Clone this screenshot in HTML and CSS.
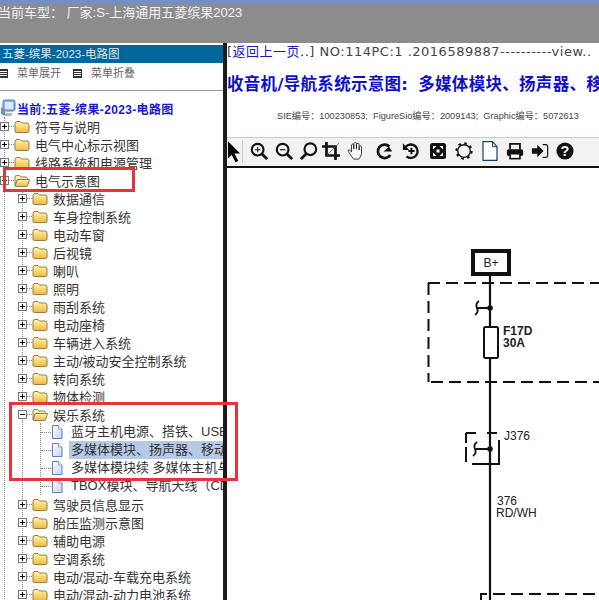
FILE: index.html
```html
<!DOCTYPE html>
<html lang="zh-CN">
<head>
    <meta charset="UTF-8">
    <title>电路图</title>
    <link rel="stylesheet" href="styles.css">
</head>
<body>
    <svg class="sprite" xmlns="http://www.w3.org/2000/svg">
        <defs>
            <linearGradient id="folder-fill" x1="0" y1="0" x2="0" y2="1">
                <stop offset="0" stop-color="#fff3b0"/>
                <stop offset="1" stop-color="#eebc3a"/>
            </linearGradient>
            <linearGradient id="doc-fill" x1="0" y1="0" x2="1" y2="1">
                <stop offset="0" stop-color="#ffffff"/>
                <stop offset="1" stop-color="#c4d4f0"/>
            </linearGradient>
        </defs>
        <symbol id="plus" viewBox="0 0 9 9">
            <rect x=".5" y=".5" width="8" height="8" fill="#fff" stroke="#777"/>
            <path d="M2 4.500h5M4.500 2v5" stroke="#000"/>
        </symbol>
        <symbol id="minus" viewBox="0 0 9 9">
            <rect x=".5" y=".5" width="8" height="8" fill="#fff" stroke="#777"/>
            <path d="M2 4.500h5" stroke="#000"/>
        </symbol>
        <symbol id="folder" viewBox="0 0 16 16">
            <path d="M1 5.500q0-2 2-2h3l1.500 1.500h5.500q2 0 2 2v6q0 1.500-1.500 1.500h-11q-1.500 0-1.500-1.500z" fill="url(#folder-fill)" stroke="#8f7c50"/>
        </symbol>
        <symbol id="folder-open" viewBox="0 0 16 16">
            <path d="M1 5q0-1.500 1.500-1.500h3l1.500 1.500h5q1.500 0 1.500 1.500v1h-10l-2.500 6z" fill="#fdf0b0" stroke="#8f7c50"/>
            <path d="M1 14l2.500-6.500h12l-2 6.500q-.2.500-1 .5h-10.500z" fill="url(#folder-fill)" stroke="#8f7c50"/>
        </symbol>
        <symbol id="doc" viewBox="0 0 12 16">
            <path d="M1.500 1.500h6l3.500 3.500v9.500h-9.500z" fill="url(#doc-fill)" stroke="#5f7fb8"/>
            <path d="M7.500 1.500v3.500h3.500" fill="#fff" stroke="#8aa2cc"/>
        </symbol>
    </svg>

    <div class="top-bar">
        <div class="car-type">当前车型： 厂家:S-上海通用五菱缤果2023</div>
    </div>

    <div class="main">
        <div class="side">
            <div class="side-title">五菱-缤果-2023-电路图</div>
            <div class="side-menu">
                <span class="menu-item"><span class="menu-icon"></span>菜单展开</span>
                <span class="menu-item"><span class="menu-icon"></span>菜单折叠</span>
            </div>
            <div class="tree-root">
                <svg class="root-icon" viewBox="0 0 16 18">
                    <rect x="3" y="1" width="12" height="11" rx="2" fill="#8fb4ee" stroke="#5577b5"/>
                    <rect x="5" y="3" width="8" height="7" fill="#dbe8ff"/>
                    <path d="M1 8l4 2v7l-4-2z" fill="#6e8fc9"/>
                    <path d="M5 14l8 0-2 3h-6z" fill="#a9b8d0"/>
                </svg>
                当前:五菱-缤果-2023-电路图
            </div>
            <ul class="tree">
                <li class="row"><svg class="box"><use href="#plus"/></svg><i class="dash"></i><svg class="folder"><use href="#folder"/></svg>符号与说明</li>
                <li class="row"><svg class="box"><use href="#plus"/></svg><i class="dash"></i><svg class="folder"><use href="#folder"/></svg>电气中心标示视图</li>
                <li class="row"><svg class="box"><use href="#plus"/></svg><i class="dash"></i><svg class="folder"><use href="#folder"/></svg>线路系统和电源管理</li>
                <li class="row"><svg class="box"><use href="#minus"/></svg><i class="dash"></i><svg class="folder"><use href="#folder-open"/></svg>电气示意图</li>
                <li>
                    <ul class="tree sub">
                        <li class="row"><svg class="box"><use href="#plus"/></svg><i class="dash"></i><svg class="folder"><use href="#folder"/></svg>数据通信</li>
                        <li class="row"><svg class="box"><use href="#plus"/></svg><i class="dash"></i><svg class="folder"><use href="#folder"/></svg>车身控制系统</li>
                        <li class="row"><svg class="box"><use href="#plus"/></svg><i class="dash"></i><svg class="folder"><use href="#folder"/></svg>电动车窗</li>
                        <li class="row"><svg class="box"><use href="#plus"/></svg><i class="dash"></i><svg class="folder"><use href="#folder"/></svg>后视镜</li>
                        <li class="row"><svg class="box"><use href="#plus"/></svg><i class="dash"></i><svg class="folder"><use href="#folder"/></svg>喇叭</li>
                        <li class="row"><svg class="box"><use href="#plus"/></svg><i class="dash"></i><svg class="folder"><use href="#folder"/></svg>照明</li>
                        <li class="row"><svg class="box"><use href="#plus"/></svg><i class="dash"></i><svg class="folder"><use href="#folder"/></svg>雨刮系统</li>
                        <li class="row"><svg class="box"><use href="#plus"/></svg><i class="dash"></i><svg class="folder"><use href="#folder"/></svg>电动座椅</li>
                        <li class="row"><svg class="box"><use href="#plus"/></svg><i class="dash"></i><svg class="folder"><use href="#folder"/></svg>车辆进入系统</li>
                        <li class="row"><svg class="box"><use href="#plus"/></svg><i class="dash"></i><svg class="folder"><use href="#folder"/></svg>主动/被动安全控制系统</li>
                        <li class="row"><svg class="box"><use href="#plus"/></svg><i class="dash"></i><svg class="folder"><use href="#folder"/></svg>转向系统</li>
                        <li class="row"><svg class="box"><use href="#plus"/></svg><i class="dash"></i><svg class="folder"><use href="#folder"/></svg>物体检测</li>
                        <li class="row"><svg class="box"><use href="#minus"/></svg><i class="dash"></i><svg class="folder"><use href="#folder-open"/></svg>娱乐系统</li>
                        <li>
                            <ul class="tree leaves">
                                <li class="leaf"><i class="elbow"></i><svg class="doc"><use href="#doc"/></svg><span class="leaf-text">蓝牙主机电源、搭铁、USB</span></li>
                                <li class="leaf"><i class="elbow"></i><svg class="doc"><use href="#doc"/></svg><span class="leaf-text selected">多媒体模块、扬声器、移动</span></li>
                                <li class="leaf"><i class="elbow"></i><svg class="doc"><use href="#doc"/></svg><span class="leaf-text">多媒体模块续 多媒体主机与</span></li>
                                <li class="leaf"><i class="elbow"></i><svg class="doc"><use href="#doc"/></svg><span class="leaf-text">TBOX模块、导航天线（CD</span></li>
                            </ul>
                        </li>
                        <li class="row"><svg class="box"><use href="#plus"/></svg><i class="dash"></i><svg class="folder"><use href="#folder"/></svg>驾驶员信息显示</li>
                        <li class="row"><svg class="box"><use href="#plus"/></svg><i class="dash"></i><svg class="folder"><use href="#folder"/></svg>胎压监测示意图</li>
                        <li class="row"><svg class="box"><use href="#plus"/></svg><i class="dash"></i><svg class="folder"><use href="#folder"/></svg>辅助电源</li>
                        <li class="row"><svg class="box"><use href="#plus"/></svg><i class="dash"></i><svg class="folder"><use href="#folder"/></svg>空调系统</li>
                        <li class="row"><svg class="box"><use href="#plus"/></svg><i class="dash"></i><svg class="folder"><use href="#folder"/></svg>电动/混动-车载充电系统</li>
                        <li class="row"><svg class="box"><use href="#plus"/></svg><i class="dash"></i><svg class="folder"><use href="#folder"/></svg>电动/混动-动力电池系统</li>
                    </ul>
                </li>
            </ul>
        </div>

        <div class="content">
            <div class="nav-line"><span class="bracket">[</span><a class="back-link" href="#">返回上一页..</a><span class="bracket">]</span> NO:114PC:1 .2016589887----------view..</div>
            <h1 class="doc-title">收音机/导航系统示意图: 多媒体模块、扬声器、移动电话</h1>
            <div class="doc-ids">SIE编号：100230853;&nbsp; FigureSio编号：2009143;&nbsp; Graphic编号：5072613</div>

            <div class="toolbar">
                <svg class="tool tool-arrow" viewBox="0 0 16 24"><path d="M1 1l13 13h-6l4 8-3 1.500-4-8-4 4z" fill="#000"/></svg>
                <svg class="tool" viewBox="0 0 20 20"><circle cx="8.500" cy="8.500" r="6.500" fill="none" stroke="#111" stroke-width="2.400"/><path d="M13 13l6 6" stroke="#111" stroke-width="3"/><path d="M5.500 8.500h6M8.500 5.500v6" stroke="#333" stroke-width="1.300"/></svg>
                <svg class="tool" viewBox="0 0 20 20"><circle cx="8.500" cy="8.500" r="6.500" fill="none" stroke="#111" stroke-width="2.400"/><path d="M13 13l6 6" stroke="#111" stroke-width="3"/><path d="M5.500 8.500h6" stroke="#333" stroke-width="1.500"/></svg>
                <svg class="tool" viewBox="0 0 20 20"><circle cx="11.500" cy="8" r="6.500" fill="none" stroke="#111" stroke-width="2.400"/><path d="M7 13l-6 6" stroke="#111" stroke-width="3"/></svg>
                <svg class="tool pull-3" viewBox="0 0 20 20"><path d="M5 0v15h15M0 5h15v15" fill="none" stroke="#111" stroke-width="3"/><path d="M5 15L19 1" stroke="#555" stroke-width=".8"/></svg>
                <svg class="tool" viewBox="0 0 20 20"><path d="M5 16L1.500 10.500q-.8-1.800.8-2l2.700 2.500V3.500q.3-1.500 1.500-1.200T7.500 3.500V8 1.800q.5-1.500 1.800-1.300t1.200 1.500V8 2.500q.5-1.300 1.800-1t1.200 1.500V9 5q.6-1 1.600-.8t1 1.500V12q0 4-3 7H7.500z" fill="#fff" stroke="#222" stroke-width="1"/></svg>
                <svg class="tool push-3" viewBox="0 0 20 20"><path d="M17 14.500A7.500 7.500 0 1 1 16 5" fill="none" stroke="#111" stroke-width="3"/><path d="M19 10.500h-9.500l6-5.500z" fill="#111"/></svg>
                <svg class="tool push-2" viewBox="0 0 20 20"><path d="M4 5.500A7.500 7.500 0 1 1 5 16" fill="none" stroke="#111" stroke-width="2.600"/><path d="M1 1.500v7.500h7z" fill="#111"/><path d="M7 10h7M10.500 6.500v7" stroke="#111" stroke-width="2.200"/></svg>
                <svg class="tool tool-small push-3" viewBox="0 0 16 16"><rect width="16" height="16" rx="2.500" fill="#111"/><path d="M3 3h3.500L3 6.500zM13 3v3.500L9.500 3zM3 13V9.500L6.500 13zM13 13H9.500L13 9.500zM6.500 6.500h3v3h-3z" fill="#fff"/></svg>
                <svg class="tool push-2" viewBox="0 0 20 20"><circle cx="10" cy="10" r="7" fill="#f5f5f5" stroke="#111" stroke-width="1.500"/><circle cx="10" cy="10" r="8.600" fill="none" stroke="#111" stroke-width="2" stroke-dasharray="3 3.750"/></svg>
                <svg class="tool tool-page push-2" viewBox="0 0 16 20"><path d="M1 .7h9.500l4.500 5v13.600h-14z" fill="#fff" stroke="#1d3f66" stroke-width="1.200"/><path d="M10.500 .7v5h4.500" fill="none" stroke="#1d3f66"/></svg>
                <svg class="tool push-1" viewBox="0 0 20 20"><path d="M4.500 8V2h11v6" fill="none" stroke="#111" stroke-width="2"/><rect x="1" y="8" width="18" height="7.500" rx="2" fill="#111"/><rect x="4.500" y="13" width="11" height="5.500" fill="#fff" stroke="#111" stroke-width="1.800"/></svg>
                <svg class="tool" viewBox="0 0 20 20"><path d="M1 7h6V3l7 7-7 7v-4H1z" fill="#111"/><path d="M13 3h3.500q2 0 2 2v10q0 2-2 2H13" fill="none" stroke="#111" stroke-width="1.300"/></svg>
                <svg class="tool" viewBox="0 0 20 20"><circle cx="10" cy="10" r="9.500" fill="#111"/><text class="help-mark" x="10" y="15.500" text-anchor="middle">?</text></svg>
            </div>

            <svg class="diagram" viewBox="0 0 372 432">
                <g fill="none" stroke="#111">
                    <rect x="246" y="83" width="36" height="23" stroke-width="4"/>
                    <path class="dashed" d="M201 115h171M201.500 115v99M204 214h168" stroke-width="2"/>
                    <path d="M263 108V432" stroke-width="2.200"/>
                    <rect x="257" y="159" width="14" height="31" rx="1.500" fill="#fff" stroke-width="2"/>
                    <path d="M263 140h-14M252 133q-4 3-2 7t-2 7" stroke-width="1.800"/>
                    <path d="M239 265v10M239 279v15M239 265h10M260 265h10M272 272v25M245 296h27" stroke-width="2"/>
                    <path d="M263 281h-14M250 274q-4 3-2 7t-2 7" stroke-width="1.800"/>
                    <path class="dashed" d="M254 432v-6h118" stroke-width="2"/>
                </g>
                <circle cx="263" cy="140" r="2.800" fill="#111"/>
                <circle cx="263" cy="281" r="2.800" fill="#111"/>
                <text class="wire-label" x="264" y="99" text-anchor="middle">B+</text>
                <text class="wire-label strong" x="276" y="167">F17D</text>
                <text class="wire-label strong" x="276" y="179">30A</text>
                <text class="wire-label" x="277" y="272">J376</text>
                <text class="wire-label" x="270" y="337">376</text>
                <text class="wire-label" x="269" y="349">RD/WH</text>
            </svg>
        </div>
    </div>

    <div class="mark mark-one"></div>
    <div class="mark mark-two"></div>
</body>
</html>
```
FILE: styles.css
```css
html, body {
    margin: 0;
    padding: 0;
    height: 600px;
    overflow: hidden;
    background-color: #fff;
    font-family: "Liberation Sans", "Noto Sans CJK SC", sans-serif;
    color: #333;
}
.sprite {
    position: absolute;
    width: 0;
    height: 0;
}
.top-bar {
    height: 39px;
    border-top: 4px solid #7390c6;
    background-color: #8c8c8c;
}
.car-type {
    color: #f2f2f2;
    font-size: 13px;
    line-height: 17px;
    margin-left: -2px;
    white-space: nowrap;
}
.main {
    display: flex;
    height: 557px;
}
.side {
    width: 223px;
    padding-top: 2px;
    overflow: hidden;
    flex-shrink: 0;
}
.side-title {
    height: 18px;
    line-height: 18px;
    background-color: #00679a;
    color: #e4e4e4;
    font-size: 11.500px;
    padding-left: 2px;
    white-space: nowrap;
}
.side-menu {
    display: flex;
    height: 25px;
    padding-top: 2px;
    border-bottom: 1px solid #999;
    font-size: 11px;
    color: #666;
    margin-bottom: 8px;
}
.menu-item {
    display: flex;
    align-items: flex-start;
    line-height: 17px;
    width: 74px;
}
.menu-icon {
    width: 7px;
    height: 7px;
    border: 1px solid #333;
    margin: 4px 9px 0 -1px;
    background: repeating-linear-gradient(#333 0 1px, #fff 1px 2px);
    flex-shrink: 0;
}
.tree-root {
    display: flex;
    align-items: center;
    height: 18px;
    color: #1a1ac8;
    font-size: 12px;
    font-weight: bold;
    letter-spacing: .35px;
    white-space: nowrap;
}
.root-icon {
    width: 16px;
    height: 18px;
    margin-right: 1px;
}
.tree {
    list-style: none;
    margin: 0 0 0 4px;
    padding: 0;
    border-left: 1px dotted #888;
}
.sub, .leaves {
    margin-left: 17px;
}
.row {
    display: flex;
    align-items: center;
    height: 18px;
    margin-left: -5px;
    font-size: 13px;
    color: #333;
    white-space: nowrap;
}
.box {
    width: 9px;
    height: 9px;
    flex-shrink: 0;
}
.dash {
    width: 5px;
    border-top: 1px dotted #888;
    flex-shrink: 0;
}
.folder {
    width: 16px;
    height: 16px;
    margin-right: 5px;
    flex-shrink: 0;
}
.leaf {
    display: flex;
    align-items: center;
    height: 18px;
    font-size: 13px;
    color: #333;
    white-space: nowrap;
}
.elbow {
    width: 10px;
    border-top: 1px dotted #888;
    flex-shrink: 0;
}
.doc {
    width: 12px;
    height: 16px;
    margin-right: 6px;
    flex-shrink: 0;
}
.leaf-text {
    display: block;
    height: 18px;
    line-height: 18px;
    padding-left: 2px;
    flex-grow: 1;
}
.selected {
    background-color: #b6c9e6;
}
.content {
    flex-grow: 1;
    min-width: 0;
    border-left: 4px solid #1c1c1c;
    overflow: hidden;
}
.nav-line {
    height: 18px;
    line-height: 18px;
    font-family: "DejaVu Sans", "Noto Sans CJK SC", sans-serif;
    font-size: 13px;
    letter-spacing: .5px;
    color: #444;
    white-space: nowrap;
}
.back-link {
    color: #1a1ac0;
    text-decoration: none;
}
.doc-title {
    margin: 12px 0 0;
    height: 24px;
    line-height: 24px;
    font-family: "DejaVu Sans", "Noto Sans CJK SC", sans-serif;
    font-size: 16.500px;
    letter-spacing: .3px;
    word-spacing: 4px;
    font-weight: bold;
    color: #0f0fc8;
    white-space: nowrap;
}
.doc-ids {
    margin: 11px 0 0 50px;
    height: 16px;
    line-height: 16px;
    font-size: 9.200px;
    color: #444;
    white-space: nowrap;
}
.toolbar {
    display: flex;
    align-items: center;
    gap: 7px;
    height: 26px;
    padding-bottom: 2px;
    margin-top: 13px;
    border-top: 1px solid #bcd0e4;
    border-bottom: 2px solid #111;
    background-color: #f2f2f2;
}
.tool {
    width: 18px;
    height: 18px;
    flex-shrink: 0;
}
.tool-arrow {
    width: 15px;
    height: 23px;
    border-right: 1px solid #ccc;
}
.tool-small {
    width: 16px;
    height: 16px;
}
.tool-page {
    width: 16px;
    height: 20px;
}
.pull-3 {
    margin-left: -3px;
}
.push-1 {
    margin-left: 1px;
}
.push-2 {
    margin-left: 2px;
}
.push-3 {
    margin-left: 3px;
}
.help-mark {
    fill: #fff;
    font-size: 16px;
    font-weight: bold;
    font-family: "Liberation Sans", sans-serif;
}
.diagram {
    display: block;
    width: 372px;
    height: 432px;
}
.dashed {
    stroke-dasharray: 12 6;
}
.wire-label {
    font-family: "Liberation Sans", sans-serif;
    font-size: 12px;
    fill: #222;
}
.strong {
    font-weight: bold;
}
.mark {
    position: absolute;
    box-sizing: border-box;
    border: 3px solid #e8333c;
}
.mark-one {
    left: 3px;
    top: 167px;
    width: 132px;
    height: 25px;
}
.mark-two {
    left: 9px;
    top: 402px;
    width: 229px;
    height: 79px;
}
```
